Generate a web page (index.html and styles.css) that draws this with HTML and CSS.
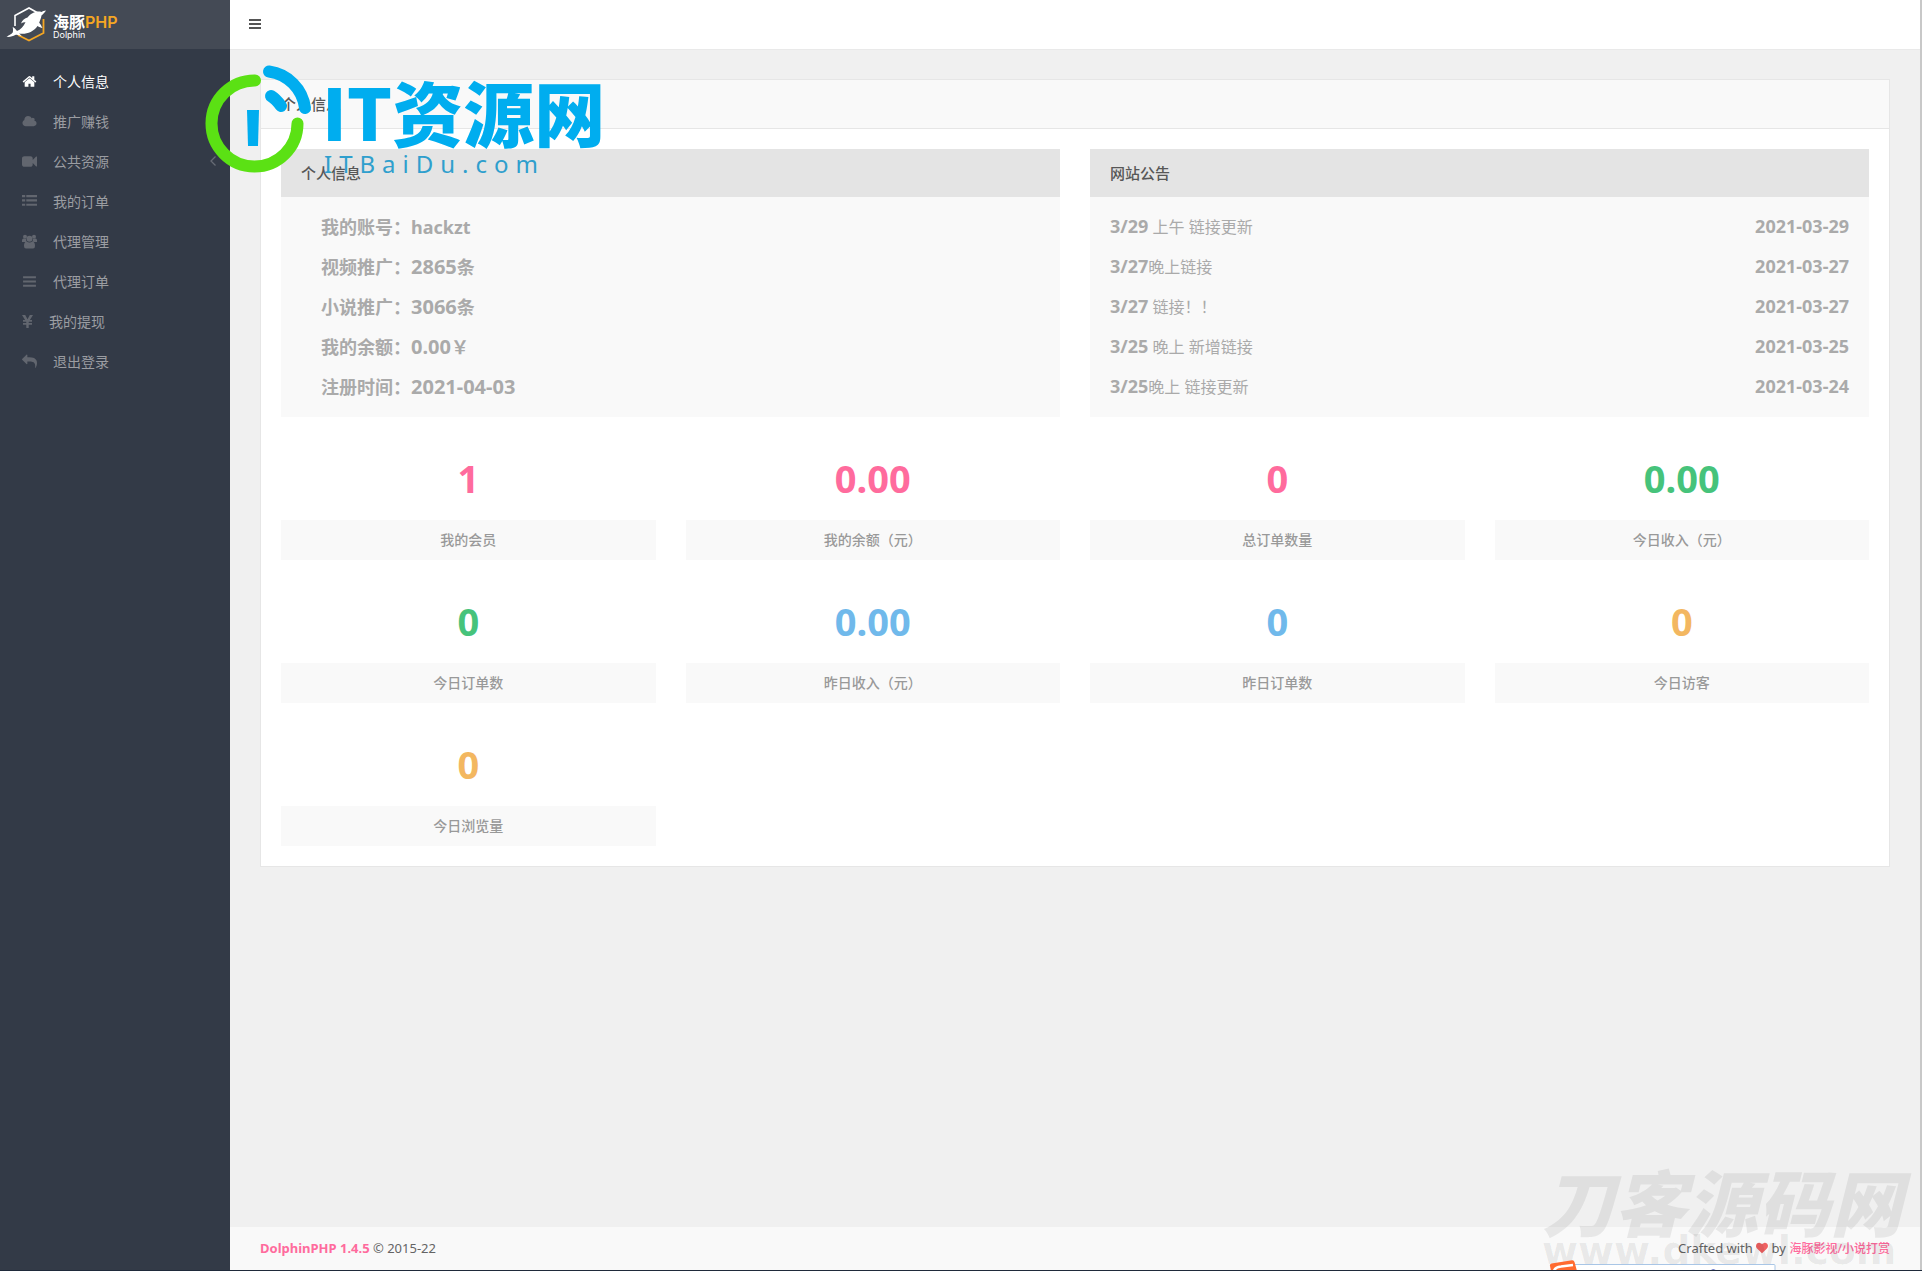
FILE: index.html
```html
<!DOCTYPE html>
<html lang="zh-CN">
<head>
<meta charset="utf-8">
<title>个人信息 - DolphinPHP</title>
<link rel="stylesheet" href="styles.css">
</head>
<body>
<div class="page">
  <aside class="sidebar">
    <a class="brand" href="#">
      <svg class="brand-mark" viewBox="0 0 42 36" aria-hidden="true">
        <path d="M9 20V9.500L23 2l8 4.500" fill="none" stroke="#fff" stroke-width="1.600"/>
        <path d="M37.500 13v14L23 34.500l-11-5.500" fill="none" stroke="#f5a623" stroke-width="1.800"/>
        <path d="M40 4.500c-2 .2-3.500.8-4.500 1.500C30 4.500 25 7.500 21.500 11.500c-2.500.6-5.500 2.500-6.500 6 1.500-1 3-1.500 4.500-1.300-2 4-5 7.500-8.500 8.800-1-1.500-2.500-3-4.300-4 .3 2 .6 3.800 0 5.400C5.500 28.500 2.500 29 .5 30.800c3.500.4 6.500-.5 8.700-1.800 2.300-.5 4.500.5 6.500 1.300-.6-1.300-1.700-2.200-2.800-2.800C20 28.500 27 26.500 31.500 20c1.500 1 3.500 1.800 5 1.900-1-1.700-1.700-3.500-3.300-5.200.8-2.500 1.900-4.500 2.300-7.200 1.500-1.500 3.200-2.700 4.500-5z" fill="#fff"/>
      </svg>
      <span class="brand-text">
        <span class="brand-name">海豚<span class="brand-php">PHP</span></span>
        <span class="brand-sub">Dolphin</span>
      </span>
    </a>
    <nav class="nav">
      <a class="nav-item active" href="#"><svg class="icon" viewBox="0 0 1792 1792"><path d="M1472 992v480q0 26-19 45t-45 19h-384v-384h-256v384h-384q-26 0-45-19t-19-45v-480q0-1 .5-3t.5-3l575-474 575 474q1 2 1 6zm223-69l-62 74q-8 9-21 11h-3q-13 0-21-7l-692-577-692 577q-12 8-24 7-13-2-21-11l-62-74q-8-10-7-23.500t11-21.500l719-599q32-26 76-26t76 26l244 204v-195q0-14 9-23t23-9h192q14 0 23 9t9 23v408l219 182q10 8 11 21.500t-7 23.500z"/></svg>个人信息</a>
      <a class="nav-item" href="#"><svg class="icon" viewBox="0 0 2048 1792"><path d="M1984 1152q0 159-112.500 271.500t-271.500 112.500h-1088q-185 0-316.500-131.500t-131.500-316.500q0-132 71-241.500t187-163.500q-2-28-2-43 0-212 150-362t362-150q158 0 286.500 88t187.500 230q70-62 166-62 106 0 181 75t75 181q0 75-41 138 129 30 213 134.500t84 239.500z"/></svg>推广赚钱</a>
      <a class="nav-item" href="#"><svg class="icon" viewBox="0 0 1792 1792"><path d="M1792 352v1088q0 42-39 59-13 5-25 5-27 0-45-19l-403-403v166q0 119-84.500 203.500t-203.500 84.500h-704q-119 0-203.500-84.500t-84.500-203.500v-704q0-119 84.500-203.500t203.500-84.500h704q119 0 203.500 84.500t84.500 203.500v165l403-402q18-19 45-19 12 0 25 5 39 17 39 59z"/></svg>公共资源<svg class="chevron" viewBox="0 0 8 12"><path d="M6.500 1.500L2 6l4.500 4.500" fill="none" stroke="currentColor" stroke-width="1.300"/></svg></a>
      <a class="nav-item" href="#"><svg class="icon" viewBox="0 0 14 14"><path d="M0 1h3v2H0zM4 1h10v2H4zM0 5h3v2H0zM4 5h10v2H4zM0 9h3v2H0zM4 9h10v2H4z"/></svg>我的订单</a>
      <a class="nav-item" href="#"><svg class="icon" viewBox="0 0 15 14"><circle cx="3" cy="2.200" r="2"/><circle cx="12" cy="2.200" r="2"/><circle cx="7.500" cy="4.200" r="3"/><path d="M0 7.500V6q0-2 1.500-2l2.500.5q0 2 1 3zM15 7.500V6q0-2-1.500-2L11 4.500q0 2-1 3zM2 11.500q0-4.500 2.700-4.500 2.800 1.800 5.600 0Q13 7 13 11.500q0 2.500-2 2.500H4q-2 0-2-2.500z"/></svg>代理管理</a>
      <a class="nav-item" href="#"><svg class="icon" viewBox="0 0 14 14"><path d="M1 2h12v2H1zM1 6h12v2H1zM1 10h12v2H1z"/></svg>代理订单</a>
      <a class="nav-item" href="#"><svg class="icon icon-narrow" viewBox="0 0 11 14"><path d="M0 .5h3.200L5.500 4.800 7.800.5H11L7.900 5.500H10v1.700H6.900L6.700 8v.6H10v1.700H6.700v3.200H4.300v-3.200H1V8.600h3.300V8l-.2-.8H1V5.500h2.100z"/></svg>我的提现</a>
      <a class="nav-item" href="#"><svg class="icon" viewBox="0 0 1792 1792"><path transform="matrix(-1 0 0 1 1792 0)" d="M1792 640q0 26-19 45l-512 512q-19 19-45 19t-45-19-19-45v-256h-224q-98 0-175.500 6t-154 21.500-133 42.500-105.500 69.500-80 101-48.500 138.500-17.500 181q0 55 5 123 0 6 2.500 23.500t2.500 26.500q0 15-8.500 25t-23.500 10q-16 0-28-17-7-9-13-22t-13.500-30-10.500-24q-127-285-127-451 0-199 53-333 162-403 875-403h224v-256q0-26 19-45t45-19 45 19l512 512q19 19 19 45z"/></svg>退出登录</a>
    </nav>
  </aside>

  <div class="main">
    <header class="topbar">
      <button class="menu-button" type="button" aria-label="切换侧栏">
        <svg viewBox="0 0 12 10"><path d="M0 0h12v2H0zM0 4h12v2H0zM0 8h12v2H0z"/></svg>
      </button>
    </header>

    <main class="content">
      <section class="block">
        <h1 class="block-title">个人信息</h1>
        <div class="block-body">
          <div class="panels">
            <section class="panel">
              <h2 class="panel-title">个人信息</h2>
              <ul class="panel-list profile">
                <li>我的账号：hackzt</li>
                <li>视频推广：<span class="value">2865</span>条</li>
                <li>小说推广：<span class="value">3066</span>条</li>
                <li>我的余额：<span class="value">0.00</span>￥</li>
                <li>注册时间：<span class="value">2021-04-03</span></li>
              </ul>
            </section>
            <section class="panel">
              <h2 class="panel-title">网站公告</h2>
              <ul class="panel-list notices">
                <li><a href="#"><b>3/29</b> 上午 链接更新</a><time>2021-03-29</time></li>
                <li><a href="#"><b>3/27</b>晚上链接</a><time>2021-03-27</time></li>
                <li><a href="#"><b>3/27</b> 链接！！</a><time>2021-03-27</time></li>
                <li><a href="#"><b>3/25</b> 晚上 新增链接</a><time>2021-03-25</time></li>
                <li><a href="#"><b>3/25</b>晚上 链接更新</a><time>2021-03-24</time></li>
              </ul>
            </section>
          </div>
          <div class="stats">
            <div class="stat pink"><div class="stat-value">1</div><div class="stat-label">我的会员</div></div>
            <div class="stat pink"><div class="stat-value">0.00</div><div class="stat-label">我的余额（元）</div></div>
            <div class="stat pink"><div class="stat-value">0</div><div class="stat-label">总订单数量</div></div>
            <div class="stat green"><div class="stat-value">0.00</div><div class="stat-label">今日收入（元）</div></div>
            <div class="stat green"><div class="stat-value">0</div><div class="stat-label">今日订单数</div></div>
            <div class="stat blue"><div class="stat-value">0.00</div><div class="stat-label">昨日收入（元）</div></div>
            <div class="stat blue"><div class="stat-value">0</div><div class="stat-label">昨日订单数</div></div>
            <div class="stat orange"><div class="stat-value">0</div><div class="stat-label">今日访客</div></div>
            <div class="stat orange"><div class="stat-value">0</div><div class="stat-label">今日浏览量</div></div>
          </div>
        </div>
      </section>
    </main>

    <footer class="footer">
      <div><a class="version" href="#">DolphinPHP 1.4.5</a> © 2015-22</div>
      <div>Crafted with <svg class="heart" viewBox="0 0 1792 1792"><path d="M896 1664q-26 0-44-18l-624-602q-10-8-27.500-26t-55.500-65.500-68-97.500-53.500-121-23.500-138q0-220 127-344t351-124q62 0 126.500 21.500t120 58 95.500 68.500 76 68q36-36 76-68t95.500-68.500 120-58 126.500-21.500q224 0 351 124t127 344q0 221-229 450l-623 600q-18 18-44 18z"/></svg> by <a class="author" href="#">海豚影视/小说打赏</a></div>
    </footer>
  </div>
  <div class="scroll-edge"></div>

  <div class="mark-top">
    <svg class="mark-logo" viewBox="0 0 116 116" aria-hidden="true">
      <g fill="none" stroke-width="12" stroke-linecap="round">
        <path d="M54 20.500A43 43 0 1 0 96.500 63.500" stroke="#5be114"/>
        <path d="M68 11.500A42 42 0 0 1 104 48" stroke="#00adef"/>
        <path d="M70 36q5 3 10 10" stroke="#00adef"/>
      </g>
      <path d="M46 50h12l-1 36H47z" fill="#00adef"/>
    </svg>
    <div class="mark-text">
      <div class="mark-name">IT资源网</div>
      <div class="mark-url">ITBaiDu.com</div>
    </div>
  </div>

  <div class="mark-bottom">
    <div class="mark-bottom-name">刀客源码网</div>
    <div class="mark-bottom-url">www.dkewl.com</div>
  </div>

  <svg class="ime-bar" viewBox="0 0 230 11" aria-hidden="true">
    <path d="M24 11V4.500H225q1 0 1 1V11" fill="#fff" stroke="#a9c6e6"/>
    <path d="M1 6q-.5-2 1.500-2.500L23 .2q2-.2 2.500 1.800L28 11H2z" fill="#ff6a2f"/>
    <path d="M5 11q1-4 7-4.500l12-1.500" fill="none" stroke="#fff" stroke-width="2.500"/>
    <path d="M43 10h2v1h-2zM90 11q3-2 7 0zM113 11q3-2 7 0zM161 11q3-3.500 7 0zM184 11l2-1h3v1zM192 11l2-1h3v1z" fill="#4352b5"/>
  </svg>
</div>
</body>
</html>
```
FILE: styles.css
```css
* {
  box-sizing: border-box;
}

body {
  margin: 0;
  font-family: "Noto Sans", "Noto Sans CJK SC", sans-serif;
  font-size: 14px;
  color: #646464;
  background: #f0f0f0;
}

a {
  color: inherit;
  text-decoration: none;
}

ul,
h1,
h2 {
  margin: 0;
  padding: 0;
  list-style: none;
}

.page {
  position: relative;
  display: flex;
  min-height: 100vh;
  overflow: hidden;
  border-bottom: 1px solid #1f2a3a;
}

/* Sidebar */

.sidebar {
  flex: 0 0 230px;
  background: #333a47;
}

.brand {
  display: flex;
  gap: 5px;
  height: 49px;
  padding: 6px 6px 0;
  background: #444a55;
}

.brand-mark {
  width: 42px;
  height: 36px;
}

.brand-text {
  display: flex;
  flex-direction: column;
  padding-top: 7px;
  color: #fff;
}

.brand-name {
  font-family: "Noto Sans CJK SC", sans-serif;
  font-size: 16px;
  font-weight: 700;
  line-height: 16px;
}

.brand-php {
  font-family: Inter, sans-serif;
  font-weight: 600;
  color: #f5a623;
}

.brand-sub {
  font-family: Inter, sans-serif;
  font-size: 9px;
  line-height: 10px;
}

.nav {
  padding-top: 12px;
}

.nav-item {
  display: flex;
  align-items: center;
  height: 40px;
  padding: 0 13px 0 22px;
  color: #9b9da2;
}

.nav-item.active,
.nav-item.active .icon {
  color: #fff;
}

.icon {
  width: 15px;
  height: 15px;
  margin-right: 16px;
  fill: currentColor;
  color: #62666f;
}

.icon-narrow {
  width: 11px;
}

.chevron {
  width: 8px;
  height: 12px;
  margin-left: auto;
  color: #666b75;
}

/* Main column */

.main {
  flex: 1;
  min-width: 0;
  display: flex;
  flex-direction: column;
}

.scroll-edge {
  flex: 0 0 2px;
  background: #c8c8c8;
}

.topbar {
  display: flex;
  align-items: center;
  height: 50px;
  padding: 0 19px 2px;
  background: #fff;
  border-bottom: 1px solid #e9e9e9;
}

.menu-button {
  display: flex;
  padding: 0;
  border: 0;
  background: none;
}

.menu-button svg {
  width: 12px;
  height: 10px;
  fill: #555;
}

.content {
  flex: 1;
  padding: 29px 30px;
}

.block {
  background: #fff;
  border: 1px solid #e6e6e6;
}

.block-title,
.panel-title {
  height: 48px;
  padding: 0 20px;
  font-size: 15px;
  font-weight: 500;
  line-height: 48px;
  color: #575757;
}

.block-title {
  height: 49px;
  background: #f9f9f9;
  border-bottom: 1px solid #e6e6e6;
}

.block-body {
  padding: 20px;
}

.panels {
  display: grid;
  grid-template-columns: repeat(2, 1fr);
  gap: 30px;
}

.panel {
  background: #f9f9f9;
}

.panel-title {
  background: #e4e4e4;
}

.panel-list {
  padding: 10px 20px;
  line-height: 40px;
  color: #aaa;
}

.panel-list li {
  height: 40px;
}

.profile {
  padding-left: 40px;
  font-size: 18px;
  font-weight: 700;
}

.value {
  font-size: 20px;
}

.notices {
  font-size: 16px;
  line-height: 38px;
}

.notices li {
  display: flex;
  justify-content: space-between;
}

.notices b,
.notices time {
  font-size: 18px;
  font-weight: 700;
}

/* Counters */

.stats {
  display: grid;
  grid-template-columns: repeat(4, 1fr);
  column-gap: 30px;
  text-align: center;
}

.stat {
  padding-top: 31px;
}

.stat-value {
  margin-bottom: 12px;
  font-size: 38px;
  font-weight: 700;
  line-height: 60px;
}

.stat-label {
  background: #f9f9f9;
  font-weight: 500;
  line-height: 40px;
  color: #999;
}

.pink .stat-value {
  color: #ff6b9d;
}

.green .stat-value {
  color: #46c37b;
}

.blue .stat-value {
  color: #70b9eb;
}

.orange .stat-value {
  color: #f3b760;
}

/* Footer */

.footer {
  display: flex;
  justify-content: space-between;
  padding: 0 30px;
  background: #f9f9f9;
  font-size: 13px;
  line-height: 43px;
}

.version {
  font-weight: 700;
  color: #ff6b9d;
}

.author {
  font-size: 12px;
  font-weight: 500;
  color: #ff6b9d;
}

.heart {
  width: 12px;
  height: 12px;
  vertical-align: -1px;
  fill: #ef6262;
}

/* Site marks laid over the page */

.mark-top {
  position: absolute;
  left: 201px;
  top: 60px;
  display: flex;
  pointer-events: none;
}

.mark-logo {
  width: 116px;
  height: 116px;
}

.mark-text {
  padding: 14px 0 0 5px;
  white-space: nowrap;
}

.mark-name {
  font-family: "Noto Sans CJK SC", sans-serif;
  font-size: 71px;
  font-weight: 900;
  line-height: 72px;
  color: #00adef;
}

.mark-url {
  padding-left: 2px;
  font-size: 24px;
  line-height: 36px;
  letter-spacing: 7px;
  color: #2f9fcd;
}

.mark-bottom {
  position: absolute;
  right: 20px;
  bottom: -1px;
  white-space: nowrap;
  color: rgba(0, 0, 0, 0.07);
  pointer-events: none;
}

.mark-bottom-name {
  font-family: "Noto Sans CJK SC", sans-serif;
  font-size: 72px;
  font-style: italic;
  font-weight: 900;
  line-height: 62px;
}

.mark-bottom-url {
  font-family: "DejaVu Sans", sans-serif;
  font-size: 39px;
  font-weight: 700;
  line-height: 40px;
}

.ime-bar {
  position: absolute;
  right: 143px;
  bottom: -1px;
  width: 230px;
  height: 11px;
}
```
